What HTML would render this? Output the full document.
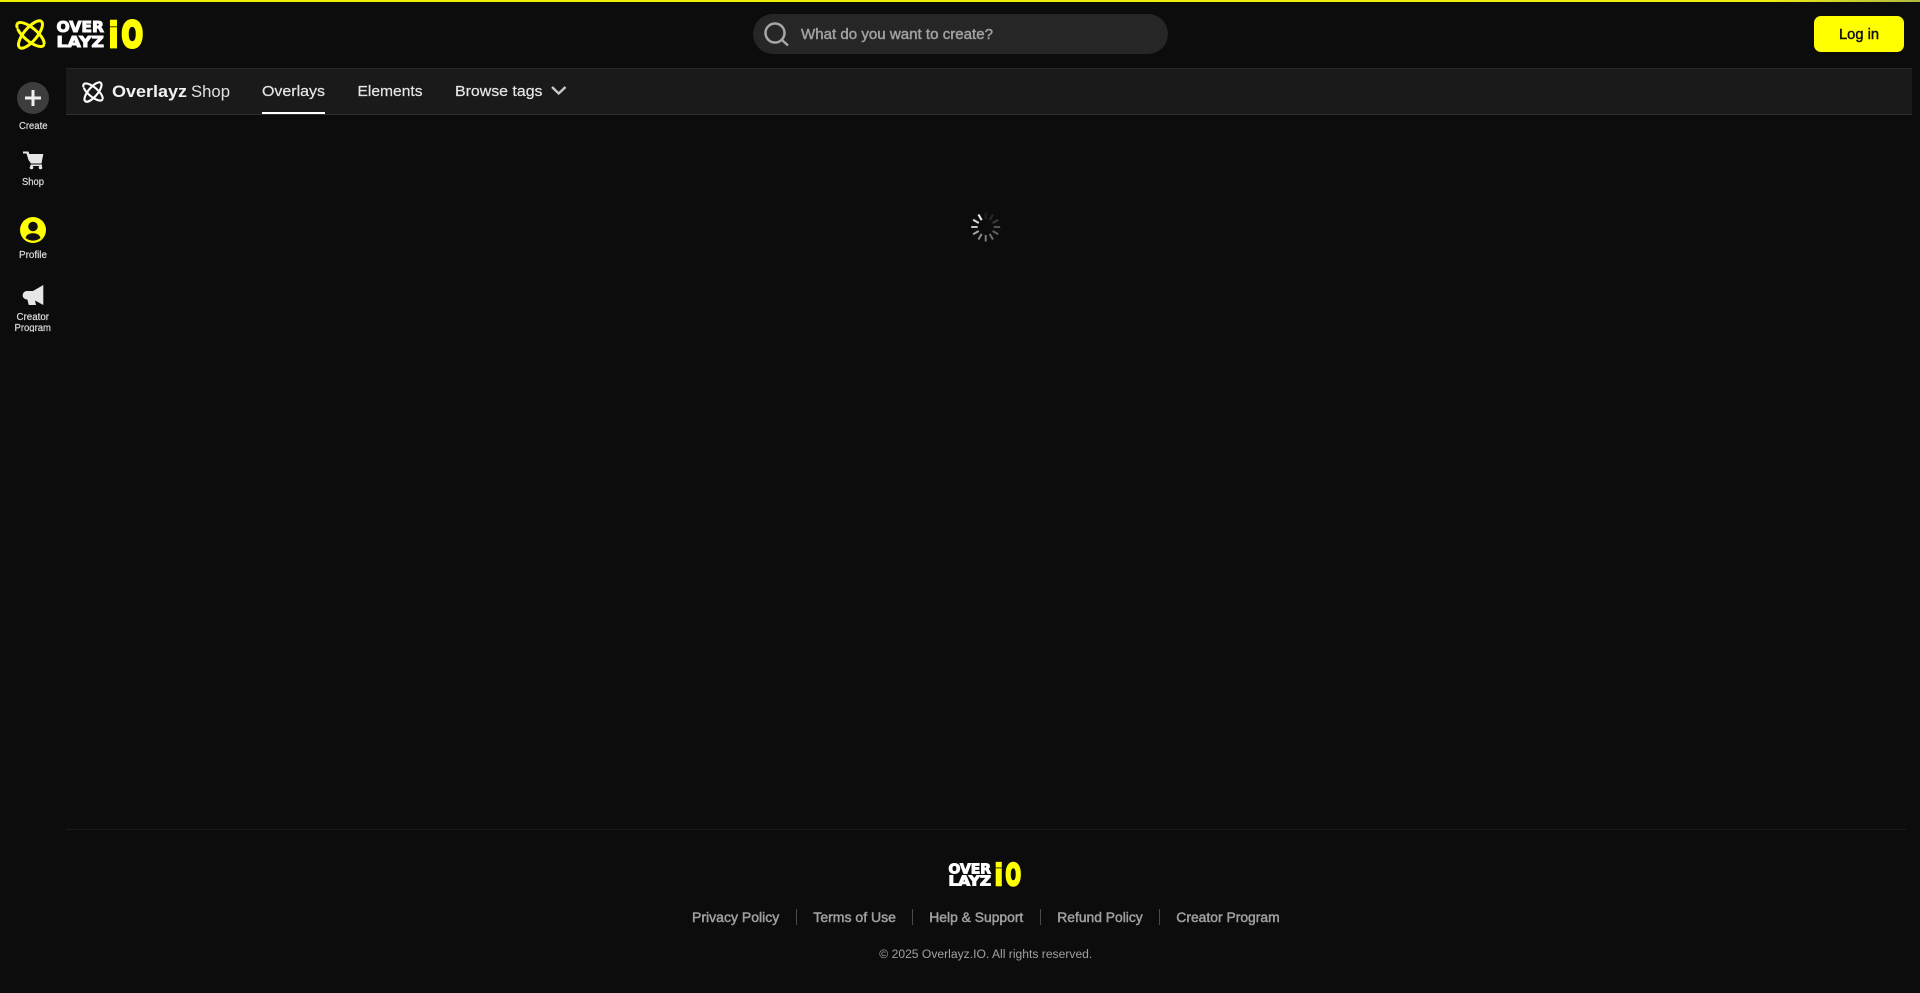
<!DOCTYPE html>
<html lang="en"><head><meta charset="utf-8"><title>Overlayz Shop</title>
<style>
html,body{margin:0;padding:0;background:#0c0c0d;width:1920px;height:993px;overflow:hidden}
svg{display:block;position:absolute;left:0;top:0}
text{font-family:"Liberation Sans",sans-serif}
.m{stroke-width:.45px;paint-order:stroke}
.s{stroke-width:.2px}
.px{font-family:"DejaVu Sans",sans-serif;font-weight:700;stroke-width:1px;stroke-linejoin:miter}
</style></head><body>
<svg width="1920" height="993" viewBox="0 0 1920 993" xmlns="http://www.w3.org/2000/svg">
<defs>
<linearGradient id="bar" x1="0" x2="1" y1="0" y2="0"><stop offset="0" stop-color="#eeee00"/><stop offset=".92" stop-color="#eeee10"/><stop offset="1" stop-color="#b0b840"/></linearGradient>
<clipPath id="cp"><rect x="0" y="310" width="66" height="22"/></clipPath>
<symbol id="atom" viewBox="0 0 28 31" overflow="visible">
<g fill="none" stroke="currentColor" stroke-width="3" stroke-linecap="round">
<ellipse cx="14" cy="15.5" rx="17" ry="6.500" transform="rotate(40 14 15.5)" stroke-dasharray="32 3 40 3"/>
<ellipse cx="14" cy="15.5" rx="17" ry="6.500" transform="rotate(-50 14 15.5)" stroke-dasharray="24 3 50 3"/>
</g></symbol>
</defs>
<rect width="1920" height="993" fill="#0c0c0d"/>
<rect width="1920" height="2" fill="url(#bar)"/>

<!-- header logo -->
<use href="#atom" x="16" y="19" width="29" height="31" color="#ffff00"/>
<text class="px" x="56.500" y="32" textLength="47.500" lengthAdjust="spacingAndGlyphs" font-size="15.500" fill="#fff" stroke="#fff">OVER</text>
<text class="px" x="56.500" y="47" textLength="47.500" lengthAdjust="spacingAndGlyphs" font-size="15.500" fill="#fff" stroke="#fff">LAYZ</text>
<text class="px" x="108" y="47.500" textLength="11" lengthAdjust="spacingAndGlyphs" font-size="36" fill="#ffff00" stroke="#ffff00" style="stroke-width:1.600px">i</text>
<text class="px" x="121.500" y="47" textLength="21.500" lengthAdjust="spacingAndGlyphs" font-size="36" fill="#ffff00" stroke="#ffff00" style="stroke-width:3px">O</text>

<!-- search -->
<rect x="753" y="14" width="415" height="40" rx="20" fill="#262626"/>
<circle cx="775" cy="33" r="9.500" fill="none" stroke="#a6a6a6" stroke-width="2.500"/>
<path d="M782 40L788 45.500" stroke="#a6a6a6" stroke-width="2.500" fill="none"/>
<text class="m" x="801" y="39" textLength="192" lengthAdjust="spacingAndGlyphs" font-size="14.500" fill="#a0a0a0" stroke="#a0a0a0">What do you want to create?</text>

<!-- login -->
<rect x="1814" y="16" width="90" height="36" rx="7" fill="#ffff00"/>
<text class="m" x="1839" y="39" textLength="40" lengthAdjust="spacingAndGlyphs" font-size="15" fill="#111" stroke="#111">Log in</text>

<!-- nav bar -->
<rect x="66" y="68" width="1846" height="47" fill="#1a1a1a"/>
<rect x="66" y="68" width="1846" height="1" fill="#282828"/>
<rect x="66" y="114" width="1846" height="1" fill="#2e2e2e"/>
<use href="#atom" x="82" y="81" width="22" height="22" color="#ffffff"/>
<text x="112" y="97" textLength="75" lengthAdjust="spacingAndGlyphs" font-size="16.500" font-weight="700" fill="#f2f2f2">Overlayz</text>
<text x="191" y="97" textLength="39" lengthAdjust="spacingAndGlyphs" font-size="16.500" fill="#e0e0e0">Shop</text>
<text class="s" stroke="#e6e6e6" x="262" y="96" textLength="63" lengthAdjust="spacingAndGlyphs" font-size="15" fill="#e6e6e6">Overlays</text>
<rect x="262" y="112" width="63" height="2" fill="#fff"/>
<text class="s" stroke="#e6e6e6" x="357.500" y="96" textLength="65" lengthAdjust="spacingAndGlyphs" font-size="15" fill="#e6e6e6">Elements</text>
<text class="s" stroke="#e6e6e6" x="455" y="96" textLength="87.500" lengthAdjust="spacingAndGlyphs" font-size="15" fill="#e6e6e6">Browse tags</text>
<path d="M552 87L558.700 93.500L565.500 87" fill="none" stroke="#c8c8c8" stroke-width="2.400"/>

<!-- sidebar -->
<circle cx="33" cy="98" r="16" fill="#3d3d3d"/>
<path d="M25 98H41M33 90V106" stroke="#f0f0f0" stroke-width="3"/>
<text class="s" stroke="#dcdcdc" x="19" y="129" textLength="28.500" lengthAdjust="spacingAndGlyphs" font-size="10" fill="#dcdcdc">Create</text>
<path d="M23 151.500H28.500L29.300 154H43.300L41.500 163.500H31L28.500 160L26.500 153.500H23Z" fill="#e6e6e6"/>
<path d="M30.500 164.500H42V166H30.500Z" fill="#e6e6e6"/>
<circle cx="31.500" cy="167.500" r="1.800" fill="#e6e6e6"/><circle cx="40.500" cy="167.500" r="1.800" fill="#e6e6e6"/>
<text class="s" stroke="#dcdcdc" x="22" y="185" textLength="22" lengthAdjust="spacingAndGlyphs" font-size="10" fill="#dcdcdc">Shop</text>
<circle cx="33" cy="230" r="13" fill="#ffff00"/>
<circle cx="33" cy="226.500" r="4.800" fill="#111"/>
<path d="M25.500 238C26.500 234.500 29.500 233.300 33 233.300C36.500 233.300 39.500 234.500 40.500 238C36 241.500 30 241.500 25.500 238Z" fill="#111"/>
<text class="s" stroke="#dcdcdc" x="19" y="258" textLength="28" lengthAdjust="spacingAndGlyphs" font-size="10" fill="#dcdcdc">Profile</text>
<path d="M43.300 285V305L35 300.500L36 305H28.800L27.300 299.500C24.500 299.500 22.700 297.500 22.700 295.500C22.700 293 24.500 291 27 291H33Z" fill="#e6e6e6"/>
<text class="s" stroke="#dcdcdc" x="16.500" y="320" textLength="32.500" lengthAdjust="spacingAndGlyphs" font-size="10" fill="#dcdcdc">Creator</text>
<g clip-path="url(#cp)"><text class="s" stroke="#dcdcdc" x="14.500" y="331" textLength="36.500" lengthAdjust="spacingAndGlyphs" font-size="10" fill="#dcdcdc">Program</text></g>

<!-- spinner -->
<g transform="translate(985.700 227)" stroke="#f4f4f4" stroke-width="2" stroke-linecap="butt">
<line y1="-8" y2="-14.500" opacity=".08"/>
<line y1="-8" y2="-14.500" transform="rotate(30)" opacity=".12"/>
<line y1="-8" y2="-14.500" transform="rotate(60)" opacity=".2"/>
<line y1="-8" y2="-14.500" transform="rotate(90)" opacity=".3"/>
<line y1="-8" y2="-14.500" transform="rotate(120)" opacity=".36"/>
<line y1="-8" y2="-14.500" transform="rotate(150)" opacity=".42"/>
<line y1="-8" y2="-14.500" transform="rotate(180)" opacity=".48"/>
<line y1="-8" y2="-14.500" transform="rotate(210)" opacity=".55"/>
<line y1="-8" y2="-14.500" transform="rotate(240)" opacity=".65"/>
<line y1="-8" y2="-14.500" transform="rotate(270)" opacity=".8"/>
<line y1="-8" y2="-14.500" transform="rotate(300)" opacity=".9"/>
<line y1="-8" y2="-14.500" transform="rotate(330)" opacity="1"/>
</g>

<!-- footer -->
<rect x="66" y="829" width="1840" height="1" fill="#1b1b1b"/>
<text class="px" x="948.500" y="873.500" textLength="42.500" lengthAdjust="spacingAndGlyphs" font-size="13.500" fill="#fff" stroke="#fff">OVER</text>
<text class="px" x="948.500" y="885.500" textLength="42.500" lengthAdjust="spacingAndGlyphs" font-size="13.500" fill="#fff" stroke="#fff">LAYZ</text>
<text class="px" x="994" y="885.500" textLength="9.500" lengthAdjust="spacingAndGlyphs" font-size="30" fill="#ffff00" stroke="#ffff00" style="stroke-width:1.300px">i</text>
<text class="px" x="1005.500" y="885" textLength="15.500" lengthAdjust="spacingAndGlyphs" font-size="29" fill="#ffff00" stroke="#ffff00" style="stroke-width:2.500px">O</text>

<g font-size="13.500" fill="#a0a0a0" stroke="#a0a0a0">
<text class="m" x="692" y="922" textLength="87.300" lengthAdjust="spacingAndGlyphs">Privacy Policy</text>
<text class="m" x="813.300" y="922" textLength="82.700" lengthAdjust="spacingAndGlyphs">Terms of Use</text>
<text class="m" x="929.300" y="922" textLength="94" lengthAdjust="spacingAndGlyphs">Help &amp; Support</text>
<text class="m" x="1057.300" y="922" textLength="85.400" lengthAdjust="spacingAndGlyphs">Refund Policy</text>
<text class="m" x="1176.300" y="922" textLength="103.400" lengthAdjust="spacingAndGlyphs">Creator Program</text>
</g>
<g fill="#4a4a4a">
<rect x="796" y="909" width="1" height="16"/><rect x="912" y="909" width="1" height="16"/>
<rect x="1040" y="909" width="1" height="16"/><rect x="1159" y="909" width="1" height="16"/>
</g>
<text x="879.300" y="958" textLength="213" lengthAdjust="spacingAndGlyphs" font-size="11.500" fill="#a0a0a0">© 2025 Overlayz.IO. All rights reserved.</text>
</svg>
</body></html>
